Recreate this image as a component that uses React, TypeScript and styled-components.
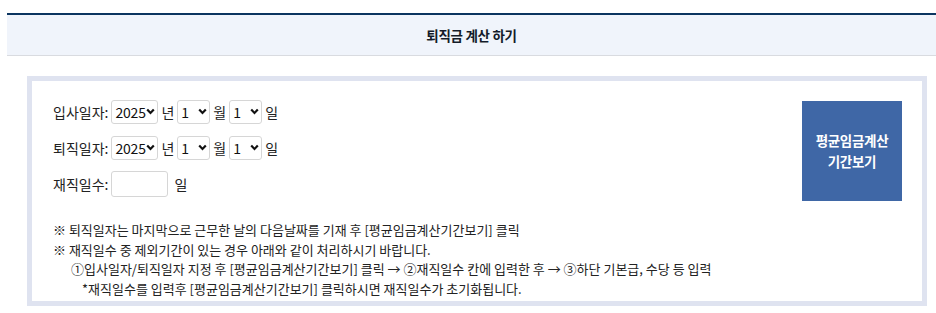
import React, { useState } from 'react';
import styled, { createGlobalStyle } from 'styled-components';

const GlobalStyle = createGlobalStyle`
  html, body {
    margin: 0;
    padding: 0;
    background: #ffffff;
    font-family: "Noto Sans CJK KR", "Noto Sans", sans-serif;
    color: #222222;
  }
`;

const Page = styled.div`
  padding: 13px 0 0 7px;
`;

const Header = styled.div`
  height: 40px;
  display: flex;
  align-items: center;
  justify-content: center;
  background: #f0f4fb;
  border-top: 2px solid #0b3560;
  border-bottom: 1px solid #d9dbe0;
`;

const Title = styled.h2`
  margin: 0;
  font-size: 13.5px;
  font-weight: 700;
  color: #141c29;
  letter-spacing: -0.3px;
`;

const Box = styled.div`
  margin: 20px 9px 0 20px;
  height: 230px;
  box-sizing: border-box;
  border: 5px solid #dfe3f0;
  padding: 19px 20px 0 21px;
`;

const Top = styled.div`
  display: flex;
  justify-content: space-between;
  align-items: flex-start;
`;

const Form = styled.div`
  display: flex;
  flex-direction: column;
  gap: 12px;
`;

const Row = styled.div<{ $tall?: boolean }>`
  display: flex;
  align-items: center;
  gap: 3px;
  height: ${p => (p.$tall ? 26 : 24)}px;
  margin-top: ${p => (p.$tall ? -1 : 0)}px;
  font-size: 14px;
  color: #222222;
`;

const Label = styled.span`
  margin-right: 0;
`;

const SelectWrap = styled.span<{ $w: number }>`
  position: relative;
  display: inline-block;
  width: ${p => p.$w}px;
  height: 24px;
`;

const Select = styled.select`
  appearance: none;
  -webkit-appearance: none;
  width: 100%;
  height: 100%;
  box-sizing: border-box;
  padding: 0 0 0 3px;
  border: 1px solid #d6d6d6;
  border-radius: 3px;
  background: #ffffff;
  font-family: "Noto Sans CJK KR", "Noto Sans", sans-serif;
  font-size: 14px;
  letter-spacing: -0.2px;
  color: #111111;
`;

const Chevron = styled.svg`
  position: absolute;
  right: 3px;
  top: 8px;
  width: 9px;
  height: 7px;
  pointer-events: none;
`;

const DaysInput = styled.input`
  width: 57px;
  height: 26px;
  box-sizing: border-box;
  border: 1px solid #d6d6d6;
  border-radius: 3px;
  margin-right: 3px;
  font-size: 13px;
`;

const PeriodButton = styled.button`
  width: 100px;
  height: 100px;
  margin-top: 1px;
  border: none;
  background: #3f67a6;
  color: #ffffff;
  font-family: "Noto Sans CJK KR", "Noto Sans", sans-serif;
  font-size: 13.5px;
  font-weight: 700;
  line-height: 21px;
  letter-spacing: -0.3px;
  cursor: pointer;
`;

const Notes = styled.div`
  margin-top: 19px;
  font-size: 13px;
  line-height: 19.5px;
  color: #222222;
`;

const Note = styled.p<{ $indent?: number }>`
  margin: 0;
  padding-left: ${p => p.$indent ?? 0}px;
`;

const years = Array.from({ length: 30 }, (_, i) => 2025 - i);
const months = Array.from({ length: 12 }, (_, i) => i + 1);
const days = Array.from({ length: 31 }, (_, i) => i + 1);

const Dropdown = ({ width, options }: { width: number; options: number[] }) => (
  <SelectWrap $w={width}>
    <Select defaultValue={options[0]}>
      {options.map(o => <option key={o} value={o}>{o}</option>)}
    </Select>
    <Chevron viewBox="0 0 9 7">
      <path d="M1.2 1.6 L4.5 5 L7.8 1.6" fill="none" stroke="#111" strokeWidth="2.2" />
    </Chevron>
  </SelectWrap>
);

const DateRow = ({ label }: { label: string }) => (
  <Row>
    <Label>{label}</Label>
    <Dropdown width={47} options={years} />
    <span>년</span>
    <Dropdown width={33} options={months} />
    <span>월</span>
    <Dropdown width={33} options={days} />
    <span>일</span>
  </Row>
);

export default function App() {
  const [workDays, setWorkDays] = useState('');

  return (
    <Page>
      <GlobalStyle />
      <Header>
        <Title>퇴직금 계산 하기</Title>
      </Header>
      <Box>
        <Top>
          <Form>
            <DateRow label="입사일자:" />
            <DateRow label="퇴직일자:" />
            <Row $tall>
              <Label>재직일수:</Label>
              <DaysInput value={workDays} onChange={e => setWorkDays(e.target.value)} />
              <span>일</span>
            </Row>
          </Form>
          <PeriodButton>
            평균임금계산
            <br />
            기간보기
          </PeriodButton>
        </Top>
        <Notes>
          <Note>※ 퇴직일자는 마지막으로 근무한 날의 다음날짜를 기재 후 [평균임금계산기간보기] 클릭</Note>
          <Note>※ 재직일수 중 제외기간이 있는 경우 아래와 같이 처리하시기 바랍니다.</Note>
          <Note $indent={18}>①입사일자/퇴직일자 지정 후 [평균임금계산기간보기] 클릭 → ②재직일수 칸에 입력한 후 → ③하단 기본급, 수당 등 입력</Note>
          <Note $indent={29}>*재직일수를 입력후 [평균임금계산기간보기] 클릭하시면 재직일수가 초기화됩니다.</Note>
        </Notes>
      </Box>
    </Page>
  );
}
